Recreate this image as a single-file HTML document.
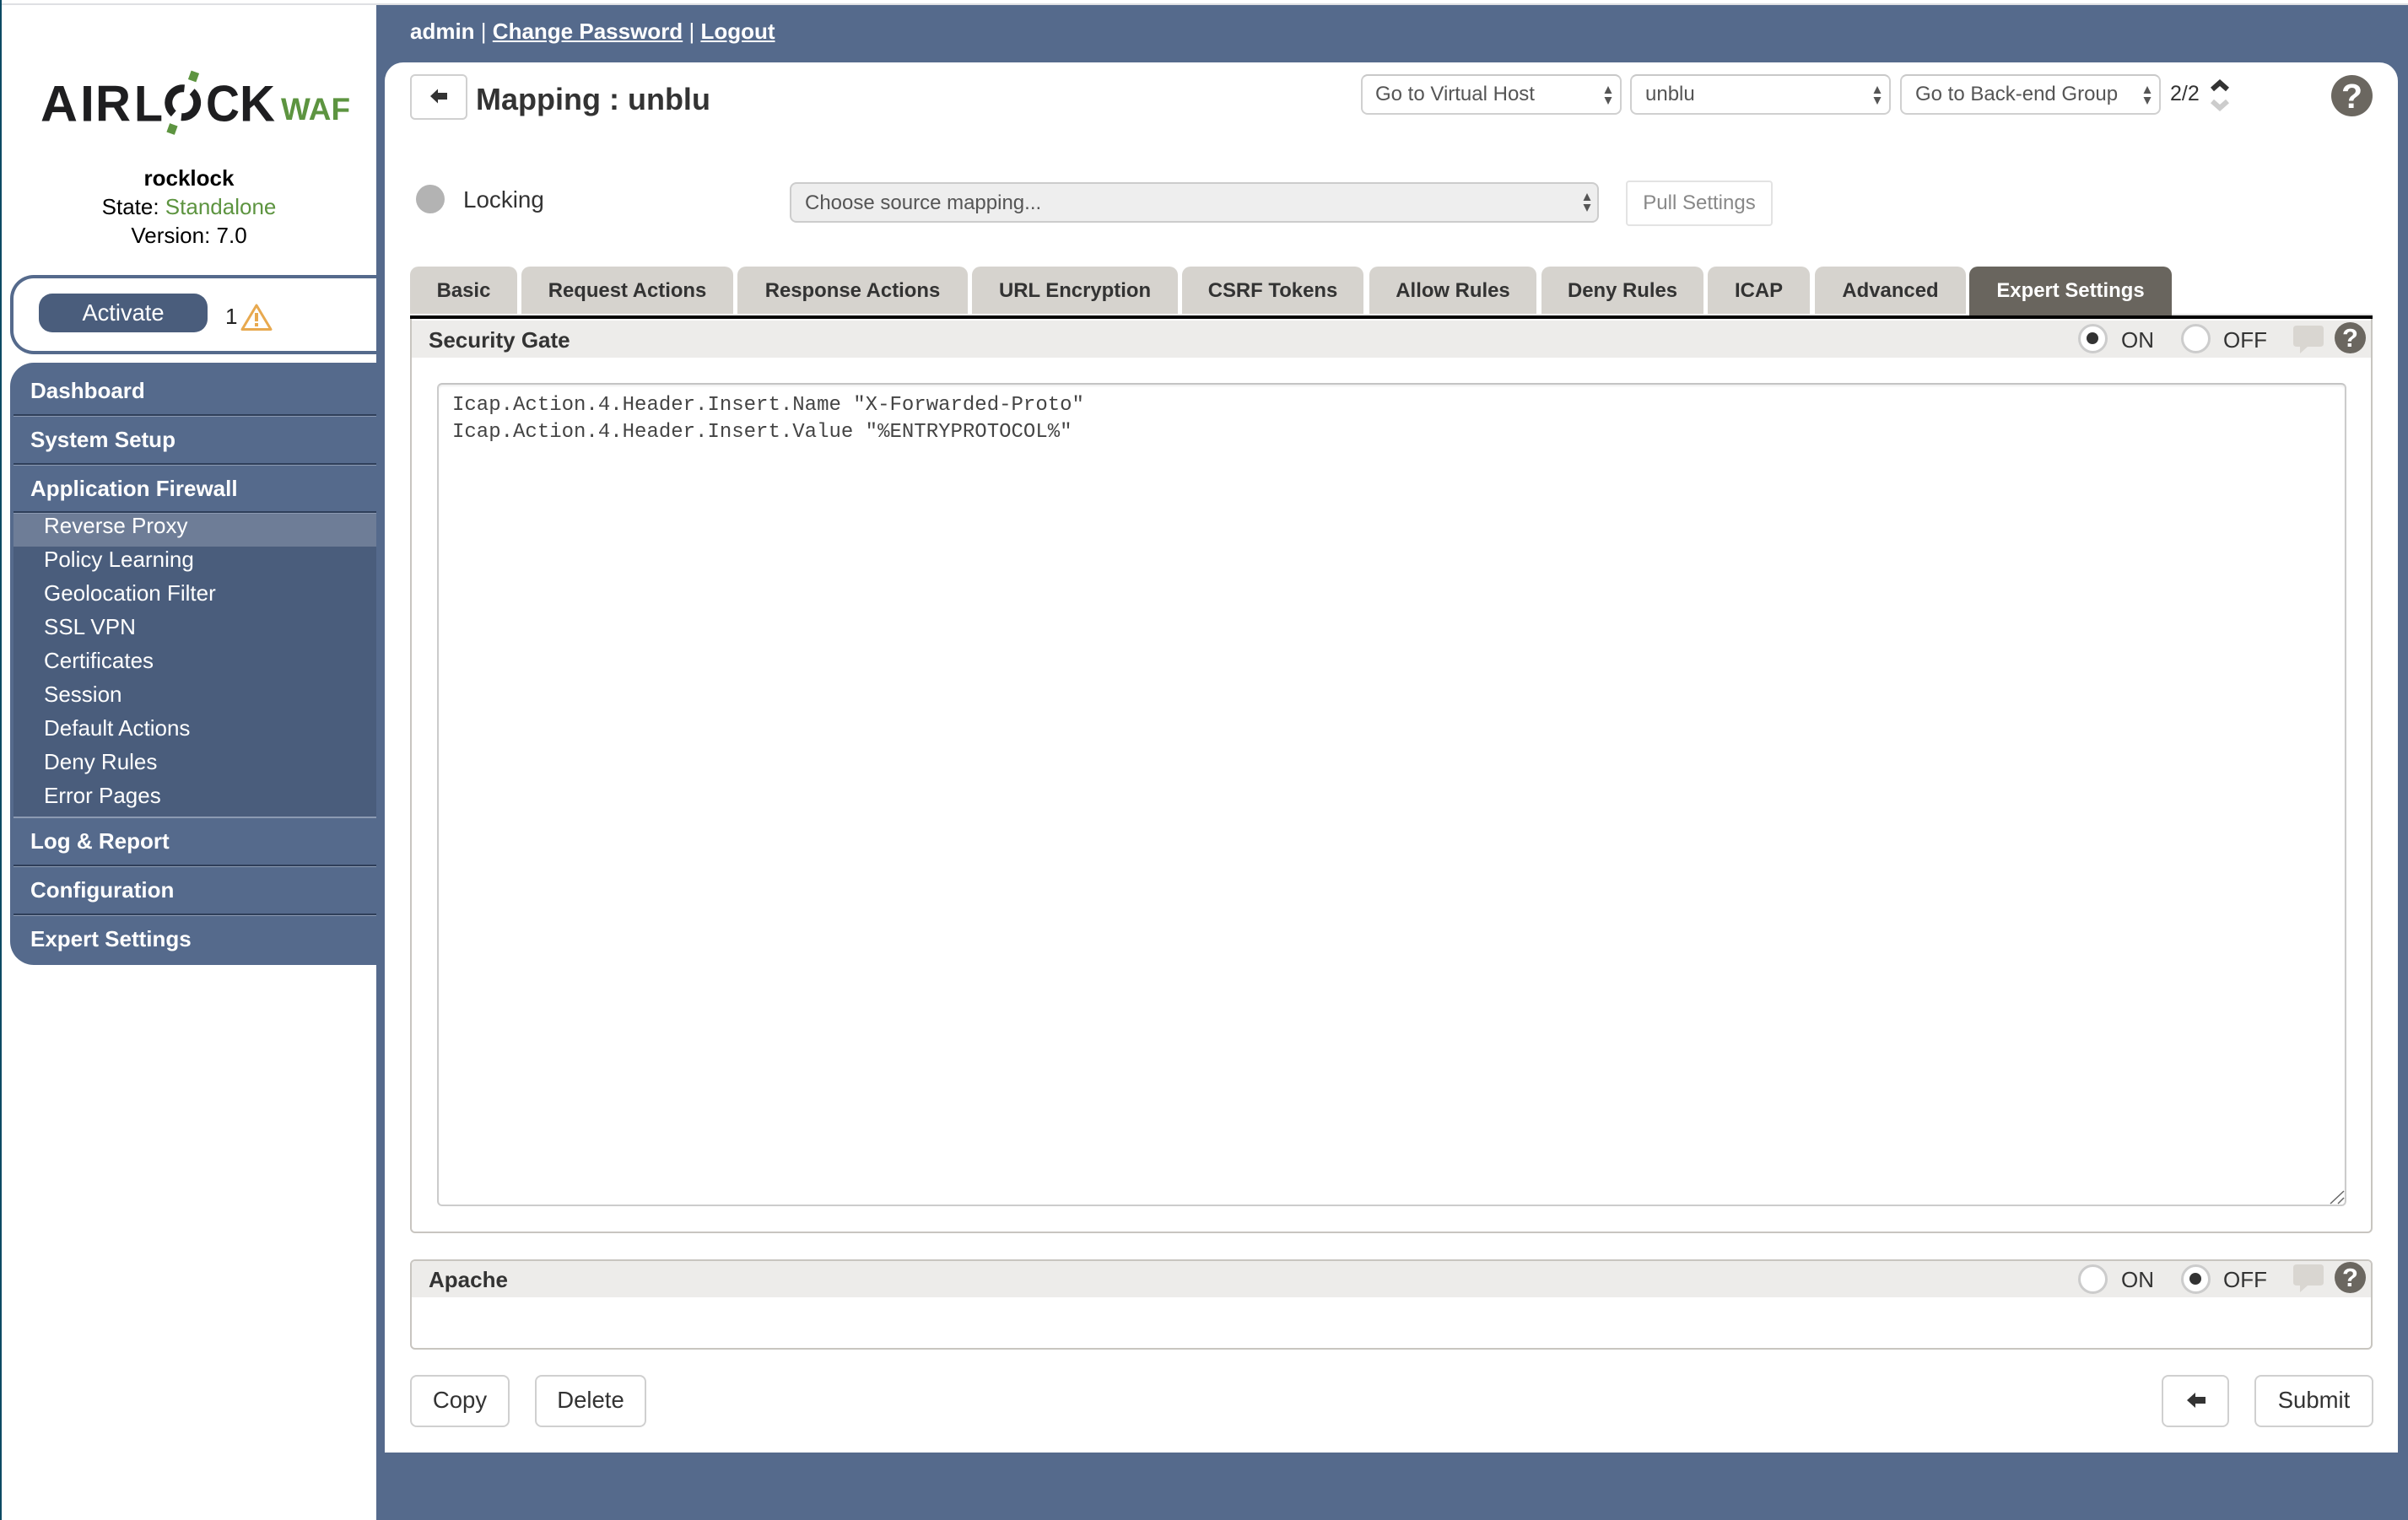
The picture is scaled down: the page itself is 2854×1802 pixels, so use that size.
<!DOCTYPE html>
<html lang="en"><head><meta charset="utf-8"><title>Mapping : unblu</title>
<style>
html,body{margin:0;padding:0;width:2854px;height:1802px;overflow:hidden;background:#fff}
body{position:relative;font-family:"Liberation Sans",Arial,sans-serif;font-size:26px;color:#333}
.a,.t{position:absolute;box-sizing:border-box}
.t{white-space:nowrap;line-height:30px;height:30px}
.b{font-weight:bold}
.m{color:#fff;font-weight:bold;left:36px}
.s{color:#fff;left:52px}
.sep{position:absolute;left:16px;width:430px;height:3px;background:linear-gradient(#2f3f5a 0,#2f3f5a 2px,#8c9ab2 2px)}
.sel{position:absolute;box-sizing:border-box;top:88px;height:48px;background:#fff;border:2px solid #d0d0d0;border-top-color:#c8c8c8;border-radius:8px}
.sel .t{left:15px;top:7px;font-size:24px;color:#555}
.tab{position:absolute;top:316px;height:56px;background:#d6d3ce;border-radius:10px 10px 0 0;box-sizing:border-box;text-align:center;font-weight:bold;font-size:23.9px;line-height:57px;color:#333;white-space:nowrap}
.sec{position:absolute;left:486px;width:2326px;box-sizing:border-box;border:2px solid #c8c5c0;border-radius:6px;background:#fff}
.radio{position:absolute;width:35px;height:35px;box-sizing:border-box;border:3.5px solid #ccc;border-radius:50%;background:#fff}
.radio.on::after{content:"";position:absolute;left:7px;top:7px;width:14px;height:14px;border-radius:50%;background:#333}
.help{position:absolute;border-radius:50%;background:#6b6760;color:#fff;font-weight:bold;text-align:center}
.btn{position:absolute;box-sizing:border-box;top:1630px;height:62px;background:#fff;border:2px solid #d0d0d0;border-radius:8px;text-align:center;font-size:27.5px;line-height:56px;color:#333}
</style></head><body>

<div class="a" style="left:0;top:4px;width:2854px;height:2px;background:#dfe0e3"></div>
<div class="a" style="left:0;top:0;width:2px;height:1802px;background:#0c4a63"></div>
<div class="a" style="left:446px;top:6px;width:2408px;height:1796px;background:#556a8c"></div>

<!-- logo -->
<svg class="a" style="left:40px;top:80px" width="390" height="90" viewBox="40 80 390 90">
<g font-family="Liberation Sans" font-weight="bold" font-size="60" fill="#1e1e20">
<text x="48" y="143.5" textLength="44" lengthAdjust="spacingAndGlyphs">A</text>
<text x="95" y="143.5" textLength="17" lengthAdjust="spacingAndGlyphs">I</text>
<text x="113" y="143.5" textLength="42" lengthAdjust="spacingAndGlyphs">R</text>
<text x="159" y="143.5" textLength="34" lengthAdjust="spacingAndGlyphs">L</text>
<text x="244" y="143.5" textLength="40" lengthAdjust="spacingAndGlyphs">C</text>
<text x="284" y="143.5" textLength="42" lengthAdjust="spacingAndGlyphs">K</text>
</g>
<g fill="none" stroke="#1e1e20" stroke-width="9">
<path d="M227.6 108.7A17 17 0 0 1 214.9 138.6"/>
<path d="M205.8 134.7A17 17 0 0 1 218.5 104.8"/>
</g>
<rect x="-5" y="-5.5" width="10" height="11" fill="#5d9440" transform="translate(229.5 90.5) rotate(20)"/>
<rect x="-5" y="-5.5" width="10" height="11" fill="#5d9440" transform="translate(204 153) rotate(20)"/>
<text x="333" y="142" font-family="Liberation Sans" font-weight="bold" font-size="37" fill="#5d9440" textLength="82" lengthAdjust="spacingAndGlyphs">WAF</text>
</svg>

<div class="t b" style="left:0;width:448px;text-align:center;top:196px;color:#000">rocklock</div>
<div class="t" style="left:0;width:448px;text-align:center;top:230px;color:#000">State: <span style="color:#5d9440">Standalone</span></div>
<div class="t" style="left:0;width:448px;text-align:center;top:264px;color:#000">Version: 7.0</div>

<!-- activate box -->
<div class="a" style="left:12px;top:326px;width:434px;height:94px;border:4px solid #556a8c;border-right:0;border-radius:28px 0 0 28px;background:#fff"></div>
<div class="a" style="left:46px;top:348px;width:200px;height:46px;background:#4a5d7c;border-radius:16px;color:#fff;text-align:center;line-height:45px;font-size:27.3px">Activate</div>
<div class="t" style="left:267px;top:360px;color:#222">1</div>
<svg class="a" style="left:284px;top:359px" width="40" height="34" viewBox="0 0 40 34">
<path d="M20 3L37 31.5H3Z" fill="#fff" stroke="#e8a94f" stroke-width="3" stroke-linejoin="round"/>
<rect x="18" y="12" width="4" height="10" fill="#e8a94f"/><rect x="18" y="24" width="4" height="4" fill="#e8a94f"/>
</svg>

<!-- menu -->
<div class="a" style="left:12px;top:430px;width:434px;height:714px;background:#556a8c;border-radius:28px 0 0 28px"></div>
<div class="a" style="left:16px;top:609px;width:430px;height:360px;background:#4a5d7c"></div>
<div class="a" style="left:16px;top:609px;width:430px;height:39px;background:#6e7d97"></div>
<div class="sep" style="top:491px"></div>
<div class="sep" style="top:549px"></div>
<div class="sep" style="top:606px"></div>
<div class="sep" style="top:968px;background:#8c9ab2;height:2px"></div>
<div class="sep" style="top:1025px"></div>
<div class="sep" style="top:1083px"></div>
<div class="t m" style="top:448px">Dashboard</div>
<div class="t m" style="top:506px">System Setup</div>
<div class="t m" style="top:564px">Application Firewall</div>
<div class="t s" style="top:608px">Reverse Proxy</div>
<div class="t s" style="top:648px">Policy Learning</div>
<div class="t s" style="top:688px">Geolocation Filter</div>
<div class="t s" style="top:728px">SSL VPN</div>
<div class="t s" style="top:768px">Certificates</div>
<div class="t s" style="top:808px">Session</div>
<div class="t s" style="top:848px">Default Actions</div>
<div class="t s" style="top:888px">Deny Rules</div>
<div class="t s" style="top:928px">Error Pages</div>
<div class="t m" style="top:982px">Log &amp; Report</div>
<div class="t m" style="top:1040px">Configuration</div>
<div class="t m" style="top:1098px">Expert Settings</div>

<!-- top bar -->
<div class="t b" style="left:486px;top:22px;color:#fff">admin <span style="font-weight:normal">|</span> <span style="text-decoration:underline">Change Password</span> <span style="font-weight:normal">|</span> <span style="text-decoration:underline">Logout</span></div>

<!-- main panel -->
<div class="a" style="left:456px;top:74px;width:2386px;height:1648px;background:#fff;border-radius:22px 22px 0 0"></div>

<div class="a" style="left:486px;top:88px;width:68px;height:54px;background:#fff;border:2px solid #d0d0d0;border-radius:6px"></div>
<svg class="a" style="left:508px;top:104px" width="24" height="20" viewBox="0 0 24 20"><path d="M2 10L11 1.5V6H22V14H11V18.5Z" fill="#333"/></svg>
<div class="t b" style="left:564px;top:103px;font-size:36px;color:#333">Mapping : unblu</div>

<div class="sel" style="left:1613px;width:309px"><div class="t">Go to Virtual Host</div>
<svg class="a" style="left:285px;top:12px" width="12" height="22" viewBox="0 0 12 22"><path d="M6 0L10.5 9H1.5ZM6 22L1.5 13H10.5Z" fill="#555"/></svg></div>
<div class="sel" style="left:1932px;width:309px"><div class="t" style="left:16px">unblu</div>
<svg class="a" style="left:285px;top:12px" width="12" height="22" viewBox="0 0 12 22"><path d="M6 0L10.5 9H1.5ZM6 22L1.5 13H10.5Z" fill="#555"/></svg></div>
<div class="sel" style="left:2252px;width:309px"><div class="t" style="left:16px">Go to Back-end Group</div>
<svg class="a" style="left:285px;top:12px" width="12" height="22" viewBox="0 0 12 22"><path d="M6 0L10.5 9H1.5ZM6 22L1.5 13H10.5Z" fill="#555"/></svg></div>
<div class="t" style="left:2572px;top:96px;font-size:25px;color:#333">2/2</div>
<svg class="a" style="left:2618px;top:92px" width="26" height="42" viewBox="0 0 26 42">
<path d="M4 14L13 6L22 14" fill="none" stroke="#333" stroke-width="6"/>
<path d="M4 28L13 36L22 28" fill="none" stroke="#ccc" stroke-width="6"/></svg>
<div class="help" style="left:2763px;top:89px;width:49px;height:49px;font-size:41px;line-height:50px">?</div>

<div class="a" style="left:493px;top:219px;width:34px;height:34px;border-radius:50%;background:#b3b3b3"></div>
<div class="t" style="left:549px;top:222px;font-size:27.8px;color:#333">Locking</div>

<div class="a" style="left:936px;top:216px;width:959px;height:48px;background:#eee;border:2px solid #ccc;border-radius:8px"></div>
<div class="t" style="left:954px;top:226px;font-size:24px;color:#555">Choose source mapping...</div>
<svg class="a" style="left:1875px;top:229px" width="12" height="22" viewBox="0 0 12 22"><path d="M6 0L10.5 9H1.5ZM6 22L1.5 13H10.5Z" fill="#555"/></svg>
<div class="a" style="left:1927px;top:214px;width:174px;height:54px;background:#fff;border:2px solid #e3e3e3;border-radius:4px;text-align:center;font-size:24px;line-height:50px;color:#888">Pull Settings</div>

<!-- tabs -->
<div class="tab" style="left:486px;width:127px">Basic</div>
<div class="tab" style="left:618px;width:251px">Request Actions</div>
<div class="tab" style="left:874px;width:273px">Response Actions</div>
<div class="tab" style="left:1152px;width:244px">URL Encryption</div>
<div class="tab" style="left:1401px;width:215px">CSRF Tokens</div>
<div class="tab" style="left:1623px;width:198px">Allow Rules</div>
<div class="tab" style="left:1827px;width:192px">Deny Rules</div>
<div class="tab" style="left:2024px;width:121px">ICAP</div>
<div class="tab" style="left:2151px;width:179px">Advanced</div>
<div class="tab" style="left:2334px;width:240px;height:58px;background:#69655e;color:#fff">Expert Settings</div>
<div class="a" style="left:2574px;top:372px;width:238px;height:2px;background:#e4e4e4"></div>

<!-- section 1 -->
<div class="sec" style="top:376px;height:1086px;border-radius:0 0 6px 6px"></div>
<div class="a" style="left:488px;top:380px;width:2322px;height:44px;background:#edecea"></div>
<div class="a" style="left:486px;top:374px;width:2326px;height:4px;background:#000"></div>
<div class="t b" style="left:508px;top:388px">Security Gate</div>
<div class="radio on" style="left:2463px;top:384px"></div>
<div class="t" style="left:2514px;top:388px;color:#333">ON</div>
<div class="radio" style="left:2585px;top:384px"></div>
<div class="t" style="left:2635px;top:388px;color:#333">OFF</div>
<svg class="a" style="left:2718px;top:385px" width="37" height="35" viewBox="0 0 37 35"><path d="M4 1H32Q36 1 36 5V22Q36 26 32 26H17L8 34V26H4Q0 26 0 22V5Q0 1 4 1Z" fill="#d9d6d1"/></svg>
<div class="help" style="left:2767px;top:382px;width:37px;height:37px;font-size:31px;line-height:38px">?</div>

<div class="a" style="left:518px;top:454px;width:2263px;height:976px;background:#fff;border:2px solid #ccc;border-top-color:#c4c4c4;border-radius:6px;box-shadow:inset 0 2px 2px #eee"></div>
<div class="a" style="left:536px;top:465px;font-family:'Liberation Mono',monospace;font-size:24px;line-height:32px;color:#444;white-space:pre">Icap.Action.4.Header.Insert.Name "X-Forwarded-Proto"
Icap.Action.4.Header.Insert.Value "%ENTRYPROTOCOL%"</div>
<svg class="a" style="left:2760px;top:1410px" width="20" height="18" viewBox="0 0 20 18"><path d="M2 17L18 2M11 17L18 10" stroke="#666" stroke-width="1.5" fill="none"/></svg>

<!-- section 2 -->
<div class="sec" style="top:1493px;height:107px"></div>
<div class="a" style="left:488px;top:1495px;width:2322px;height:43px;background:#edecea;border-radius:4px 4px 0 0"></div>
<div class="t b" style="left:508px;top:1502px">Apache</div>
<div class="radio" style="left:2463px;top:1499px"></div>
<div class="t" style="left:2514px;top:1502px;color:#333">ON</div>
<div class="radio on" style="left:2585px;top:1499px"></div>
<div class="t" style="left:2635px;top:1502px;color:#333">OFF</div>
<svg class="a" style="left:2718px;top:1498px" width="37" height="35" viewBox="0 0 37 35"><path d="M4 1H32Q36 1 36 5V22Q36 26 32 26H17L8 34V26H4Q0 26 0 22V5Q0 1 4 1Z" fill="#d9d6d1"/></svg>
<div class="help" style="left:2767px;top:1496px;width:37px;height:37px;font-size:31px;line-height:38px">?</div>

<!-- buttons -->
<div class="btn" style="left:486px;width:118px">Copy</div>
<div class="btn" style="left:634px;width:132px">Delete</div>
<div class="btn" style="left:2562px;width:80px"></div>
<svg class="a" style="left:2591px;top:1650px" width="24" height="20" viewBox="0 0 24 20"><path d="M1 10L11 1V6H23V14H11V19Z" fill="#333"/></svg>
<div class="btn" style="left:2672px;width:141px">Submit</div>

</body></html>
